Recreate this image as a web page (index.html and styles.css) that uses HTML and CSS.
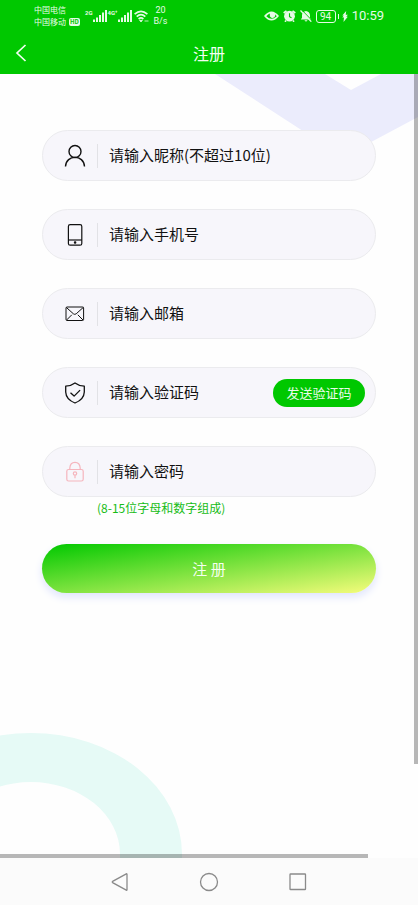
FILE: index.html
```html
<!DOCTYPE html>
<html lang="zh-CN">
<head>
<meta charset="utf-8">
<meta name="viewport" content="width=device-width, initial-scale=1">
<title>注册</title>
<link rel="stylesheet" href="styles.css">
</head>
<body>
<div class="status">
  <div class="carriers">
    <span>中国电信</span>
    <span class="carrier">中国移动 <b class="hd">HD</b></span>
  </div>
  <div class="signal">
    <span class="gen">2G</span>
    <svg width="14" height="12" viewBox="0 0 14 12" fill="currentColor"><path d="M0 9.500h2V12H0zM3 7.500h2V12H3zM6 5h2v7H6zM9 2.500h2V12H9zM12 0h2v12h-2z"/></svg>
  </div>
  <div class="signal">
    <span class="gen">4G⁺</span>
    <svg width="14" height="12" viewBox="0 0 14 12" fill="currentColor"><path d="M0 9.500h2V12H0zM3 7.500h2V12H3zM6 5h2v7H6zM9 2.500h2V12H9zM12 0h2v12h-2z"/></svg>
  </div>
  <svg class="wifi" width="15" height="13" viewBox="0 0 15 13" fill="none" stroke="currentColor" stroke-width="1.700"><path d="M.6 4.200Q7 -1.600 13.400 4.200M2.700 6.700Q7 2.700 11.300 6.700M4.600 9Q7 6.900 9.400 9"/><path d="M5.600 10.300h2.800L7 12zM10.500 11h4" fill="currentColor" stroke-width=".8"/></svg>
  <div class="rate"><span>20</span><span>B/s</span></div>
  <div class="system">
    <svg width="15" height="10" viewBox="0 0 15 10"><path d="M0 5Q7.500-4 15 5Q7.500 14 0 5z" fill="currentColor"/><path d="M2.300 5.200Q4 3 6 2.400Q5 6.500 8.500 7Q12 6.500 11 3.200Q12 4 12.800 5.200Q7.500 10.300 2.300 5.200z" fill="#00c800"/><circle cx="8.300" cy="4.300" r="2" fill="currentColor"/></svg>
    <svg width="13" height="12" viewBox="0 0 13 12"><path d="M.7 3L3.500.8M12.300 3L9.500.8M3 10.500L2 11.700M10 10.500l1 1.200" stroke="currentColor" stroke-width="1.700"/><circle cx="6.500" cy="6.200" r="5.400" fill="currentColor"/><path d="M6.500 3.300v3.300l2 1.200" fill="none" stroke="#00c800" stroke-width="1.100"/></svg>
    <svg width="12" height="12" viewBox="0 0 12 12"><path d="M.8 9.500l1.200-1.700V5Q2.500 1.500 6 1Q9.500 1.500 10 5v2.800L11.200 9.500zM4.300 10.200h3.400L6 11.800z" fill="currentColor"/><path d="M1.800 0L12 10.500" stroke="#00c800" stroke-width="1"/><path d="M.5.500L11.300 11.700" stroke="currentColor" stroke-width="1.300"/></svg>
    <span class="battery">94</span>
    <svg width="6" height="11" viewBox="0 0 6 11" fill="currentColor"><path d="M4.200 0L.3 4.500h1.500L.3 6.500h1.700L1.500 11L5.800 5.800H4.300L5.800 3.800H3.700z"/></svg>
    <span class="clock">10:59</span>
  </div>
</div>
<header class="bar">
  <button class="back" type="button" aria-label="返回"><svg width="12" height="18" viewBox="0 0 12 18" fill="none" stroke="currentColor" stroke-width="1.700"><path d="M10.500 1L2 9l8.500 8"/></svg></button>
  <h1>注册</h1>
</header>
<main class="page">
  <svg class="chevron" width="205" height="84" viewBox="0 0 205 84" fill="#ebecfc"><path d="M2 0L130 83L205 43V0H168L138 16L112 0z"/></svg>
  <svg class="ring" width="184" height="126" viewBox="0 0 184 126"><path d="M-120 122A151 121 0 0 1 182 122V126H120V122A89 72 0 0 0-58 122z" fill="#e6faf6"/></svg>
  <form class="form">
    <div class="field">
      <label for="nick" aria-label="昵称"><svg width="22" height="24" viewBox="0 0 22 24" fill="none" stroke="currentColor" stroke-width="1.400"><circle cx="11" cy="7.500" r="6"/><path d="M1.500 22.500C2 10.300 20 10.300 20.500 22.500"/></svg></label>
      <input id="nick" type="text" placeholder="请输入昵称(不超过10位)">
    </div>
    <div class="field">
      <label for="phone" aria-label="手机号"><svg width="22" height="24" viewBox="0 0 22 24" fill="none" stroke="currentColor" stroke-width="1.200"><rect x="4.400" y="1.600" width="13.400" height="20.600" rx="1.800"/><path d="M4.400 17H17.800"/><circle cx="11.100" cy="19.500" r=".7" fill="currentColor"/></svg></label>
      <input id="phone" type="tel" placeholder="请输入手机号">
    </div>
    <div class="field">
      <label for="mail" aria-label="邮箱"><svg width="22" height="24" viewBox="0 0 22 24" fill="none" stroke="currentColor" stroke-width="1"><rect x="2" y="5" width="17.600" height="13.500" rx="1"/><path d="M2.400 5.500l7 6.300q1.400 1.100 2.800 0L19.200 5.500M2.600 18l5.200-5.200M19 18l-5.200-5.200"/></svg></label>
      <input id="mail" type="email" placeholder="请输入邮箱">
    </div>
    <div class="field">
      <label for="code" aria-label="验证码"><svg width="22" height="24" viewBox="0 0 22 24" fill="none" stroke="currentColor" stroke-width="1.300" stroke-linejoin="round"><path d="M11 2Q15 5 20.300 5.200V11Q20 18.500 11 22Q2 18.500 1.700 11V5.200Q7 5 11 2z"/><path d="M6.500 11.800l3.600 3.300 6-6"/></svg></label>
      <input id="code" type="text" placeholder="请输入验证码">
      <button class="send" type="button">发送验证码</button>
    </div>
    <div class="field">
      <label class="pink" for="pass" aria-label="密码"><svg width="22" height="24" viewBox="0 0 22 24" fill="none" stroke="currentColor" stroke-width="1.200"><rect x="2.800" y="9.500" width="16.400" height="11.500" rx="1.800"/><path d="M5.800 9.500V8Q6.200 2.300 11 2.300T16.200 8v1.500"/><circle cx="11" cy="13.500" r="1.700"/><path d="M11 15.200v3"/></svg></label>
      <input id="pass" type="password" placeholder="请输入密码" aria-describedby="hint">
    </div>
    <p class="hint" id="hint">(8-15位字母和数字组成)</p>
    <button class="submit" type="submit">注 册</button>
  </form>
  <div class="track-y"></div>
  <div class="track-x"></div>
</main>
<nav class="keys">
  <button type="button" aria-label="后退"><svg width="20" height="20" viewBox="0 0 20 20"><path d="M17 2.200V17.800Q17 18.500 16.300 18.100L2.600 10.600Q1.800 10 2.600 9.400L16.300 1.900Q17 1.500 17 2.200z"/></svg></button>
  <button type="button" aria-label="主页"><svg width="20" height="20" viewBox="0 0 20 20"><circle cx="10" cy="10" r="8.500"/></svg></button>
  <button type="button" aria-label="最近任务"><svg width="20" height="20" viewBox="0 0 20 20"><rect x="2" y="2" width="15.500" height="15.500" rx=".6"/></svg></button>
</nav>
</body>
</html>
```
FILE: styles.css
```css
* { box-sizing: border-box; }

body {
  margin: 0;
  min-height: 100vh;
  display: flex;
  flex-direction: column;
  background: #fefefe;
  font-family: "Noto Sans CJK SC", sans-serif;
  color: #111;
}

button, input { font: inherit; color: inherit; border: 0; background: none; padding: 0; }
svg { display: block; flex: none; }

.status {
  display: flex;
  align-items: center;
  height: 32px;
  padding: 0 34px;
  background: #00c800;
  color: #e6fbe6;
  font-size: 9px;
  line-height: 12px;
}
.carriers { display: flex; flex-direction: column; width: 51px; white-space: nowrap; font-size: 8px; }
.carrier { display: flex; align-items: center; gap: 3px; }
.hd { padding: 0 1px; border-radius: 2px; background: #e6fbe6; color: #00c800; font-size: 6px; line-height: 8px; }
.signal { display: flex; align-items: flex-start; }
.signal + .signal { margin-left: 1px; }
.gen { min-width: 7px; font-family: Roboto, sans-serif; font-size: 6px; line-height: 6px; font-weight: 700; white-space: nowrap; }
.wifi { margin-left: 2px; }
.rate { display: flex; flex-direction: column; align-items: center; margin-left: 5px; font-family: Roboto, sans-serif; line-height: 11px; }
.system { display: flex; align-items: center; gap: 4px; margin-left: auto; }
.battery {
  position: relative;
  width: 20px;
  margin-right: 2px;
  border: 1px solid currentColor;
  border-radius: 3px;
  font-family: Roboto, sans-serif;
  font-size: 10px;
  line-height: 11px;
  text-align: center;
}
.battery::after { content: ""; position: absolute; right: -4px; top: 3px; width: 1px; height: 5px; background: currentColor; }
.clock { font-family: Roboto, sans-serif; font-size: 13px; }

.bar {
  display: grid;
  grid-template-columns: 42px 1fr 42px;
  align-items: center;
  height: 42px;
  background: #00c800;
  color: #f2fff2;
}
.back { display: grid; place-items: center; height: 42px; }
.bar h1 { margin: 0; text-align: center; font-size: 16px; font-weight: 400; line-height: 24px; }

.page { position: relative; flex: 1; overflow: hidden; padding: 56px 42px 80px; }
.chevron { position: absolute; top: 0; right: 0; }
.ring { position: absolute; left: 0; bottom: 0; }

.form { position: relative; display: flex; flex-direction: column; gap: 28px; }
.field {
  display: flex;
  align-items: center;
  height: 51px;
  padding: 0 10px 0 21px;
  border: 1px solid #ebebee;
  border-radius: 26px;
  background: #f7f6fb;
}
.field label { width: 34px; flex: none; border-right: 1px solid #e2e2e6; }
.field .pink { color: #f5b5bd; }
.field input { flex: 1; min-width: 0; height: 40px; padding: 0 0 2px 11px; font-size: 15px; outline: 0; }
.field input::placeholder { color: #111; opacity: 1; }
.send { flex: none; width: 92px; height: 28px; border-radius: 14px; background: #00c800; color: #e9fbe9; font-size: 13px; line-height: 20px; }

.hint { margin: -25px 0 0 55px; color: #16bc16; font-size: 12px; line-height: 16px; }
.submit {
  height: 49px;
  border-radius: 25px;
  background: linear-gradient(to bottom right, #00c800, #f6fc7c);
  box-shadow: 0 4px 8px #dfe4fc;
  color: #f5fff0;
  font-size: 15px;
}

.track-y { position: absolute; top: 0; right: 0; width: 4px; height: 88%; background: rgba(0, 0, 0, .28); }
.track-x { position: absolute; left: 0; bottom: 0; width: 88%; height: 4px; background: rgba(0, 0, 0, .28); }

.keys { display: flex; justify-content: center; align-items: center; gap: 69px; height: 47px; background: #fbfbfb; }
.keys svg { fill: none; stroke: #8a8a8a; stroke-width: 1.3; }
```
